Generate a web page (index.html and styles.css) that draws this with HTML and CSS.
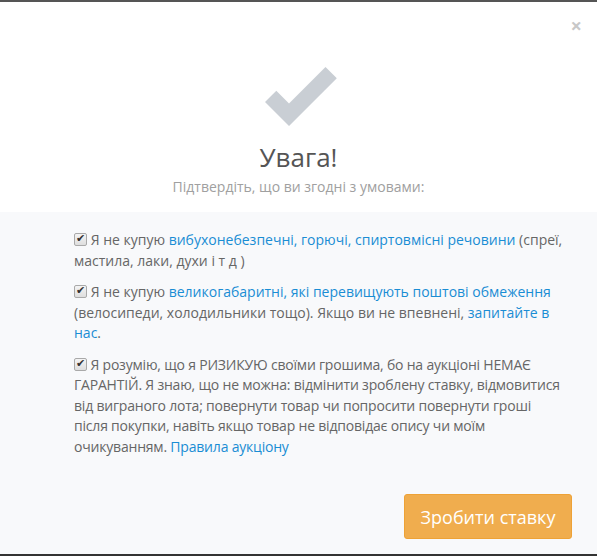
FILE: index.html
```html
<!DOCTYPE html>
<html lang="uk">

<head>
    <meta charset="UTF-8">
    <meta name="viewport" content="width=device-width, initial-scale=1.0">
    <title>Увага!</title>
    <link rel="stylesheet" href="styles.css">
</head>

<body>
    <div class="modal">
        <div class="modal-head">
            <a href="javascript:" class="close">&times;</a>
            <svg class="icon-ok" viewBox="0 0 80 68" width="80" height="68">
                <polygon points="5,40 16.3,28.7 29,41.4 65.5,4.9 76.8,16.2 29,64" fill="#c9ced4" />
            </svg>
            <h2>Увага!</h2>
            <p class="sub">Підтвердіть, що ви згодні з умовами:</p>
        </div>
        <div class="modal-body">
            <div class="terms">
                <label class="term">
                    <input type="checkbox" checked />
                    Я не купую <a href="javascript:">вибухонебезпечні, горючі, спиртовмісні речовини</a> (спреї, мастила, лаки, духи і т д )
                </label>
                <label class="term">
                    <input type="checkbox" checked />
                    Я не купую <a href="javascript:">великогабаритні, які перевищують поштові обмеження</a> (велосипеди, холодильники тощо). Якщо ви не впевнені, <a href="javascript:">запитайте в нас</a>.
                </label>
                <label class="term term-long">
                    <input type="checkbox" checked />
                    Я розумію, що я РИЗИКУЮ своїми грошима, бо на аукціоні НЕМАЄ<br>
                    ГАРАНТІЙ. Я знаю, що не можна: відмінити зроблену ставку, відмовитися<br>
                    від виграного лота; повернути товар чи попросити повернути гроші<br>
                    після покупки, навіть якщо товар не відповідає опису чи моїм<br>
                    очикуванням. <a href="javascript:">Правила аукціону</a>
                </label>
            </div>
            <div class="actions">
                <button class="btn-bid">Зробити ставку</button>
            </div>
        </div>
    </div>
</body>

</html>
```

FILE: styles.css
```css
* {
    margin: 0;
    padding: 0;
    box-sizing: border-box;
}

body {
    background: #fff;
    color: #666;
    font-family: "Open Sans", "Liberation Sans", sans-serif;
    font-size: 14px;
}

a {
    text-decoration: none;
    color: #1a8dd4;
}

.modal {
    width: 597px;
    height: 556px;
    border-top: 2px solid #555;
    border-bottom: 2px solid #333;
    display: flex;
    flex-direction: column;
    overflow: hidden;
}

/* верхня частина з галочкою */
.modal-head {
    position: relative;
    height: 210px;
    padding-top: 60px;
    display: flex;
    flex-direction: column;
    align-items: center;
    background: #fff;
}

.modal-head .close {
    position: absolute;
    top: 12px;
    right: 15px;
    font: bold 20px/24px "Open Sans", "Liberation Sans", sans-serif;
    color: #c8c8c8;
}

.icon-ok {
    display: block;
    margin-left: 3px;
}

.modal-head h2 {
    margin-top: 9px;
    font-size: 26px;
    line-height: 36px;
    font-weight: 500;
    color: #555;
}

.modal-head .sub {
    margin-top: 2px;
    line-height: 20px;
    color: #a0a0a0;
}

/* умови */
.modal-body {
    flex: 1;
    background: #f8f9fb;
    padding-top: 18px;
    display: flex;
    flex-direction: column;
}

.terms {
    width: 490px;
    margin-left: 74px;
}

.term {
    display: block;
    line-height: 20.5px;
    margin-bottom: 11px;
    cursor: pointer;
}

.term-long {
    white-space: nowrap;
    letter-spacing: -0.2px;
}

.term input[type='checkbox'] {
    appearance: none;
    -webkit-appearance: none;
    position: relative;
    top: 1px;
    width: 13px;
    height: 13px;
    border: 1px solid #a9a9a9;
    border-radius: 2px;
    background: linear-gradient(#f4f4f4, #dedede);
    vertical-align: baseline;
    outline: none;
}

.term input[type='checkbox']:checked::before {
    content: '✔';
    position: absolute;
    left: 1px;
    top: -3px;
    font: 11px/16px "DejaVu Sans", sans-serif;
    color: #333;
}

.actions {
    margin-top: auto;
    padding: 0 25px 15px 0;
    display: flex;
    justify-content: flex-end;
}

.btn-bid {
    width: 168px;
    height: 45px;
    border: 1px solid #eea236;
    border-radius: 3px;
    background: #f0ad4e;
    color: #fff;
    font: 18px "Open Sans", "Liberation Sans", sans-serif;
    cursor: pointer;
}
```
